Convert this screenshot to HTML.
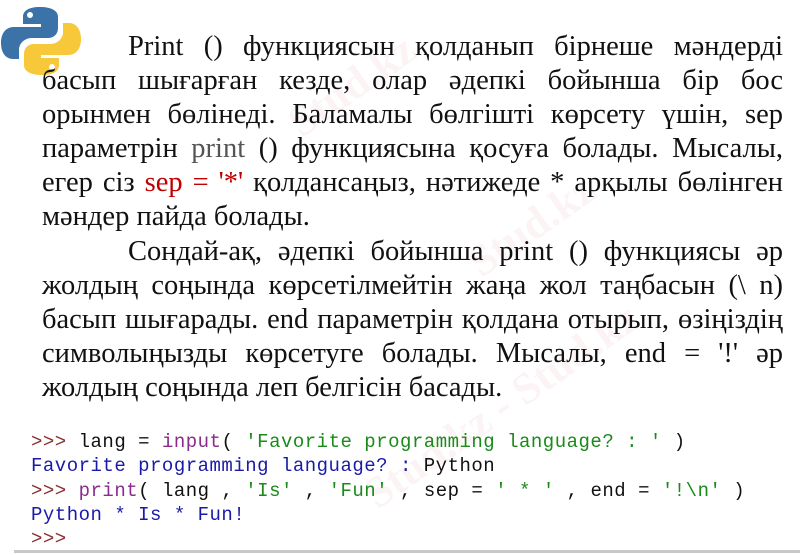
<!DOCTYPE html>
<html><head><meta charset="utf-8"><style>
body{margin:0;width:800px;height:555px;background:#fff;position:relative;overflow:hidden}
.t{position:absolute;left:42px;top:30px;width:741px;font-family:"Liberation Serif",serif;font-size:28.5px;line-height:34.1px;color:#111}
.t div{text-align:justify;text-align-last:justify;white-space:nowrap}
.t div.l{text-align-last:left}
.t div.i{padding-left:86px}
.g{color:#555}.r{color:#c00000}
.c{position:absolute;left:31px;top:430px;font-family:"Liberation Mono",monospace;font-size:19px;letter-spacing:0.5px;line-height:24.3px;white-space:pre;color:#111}
.p{color:#8b2e2e}.f{color:#8b2b8b}.s{color:#1a8a1a}.b{color:#1a1aa8}
.hr{position:absolute;left:14px;top:550px;width:786px;height:3px;background:#c8c8c8}
.wm{position:absolute;font-family:"Liberation Serif",serif;font-weight:bold;font-size:44px;color:rgba(200,60,60,0.06);transform:rotate(-35deg)}
</style></head><body>
<div class="wm" style="left:280px;top:60px">Stud.kz</div>
<div class="wm" style="left:460px;top:200px">Stud.kz</div>
<div class="wm" style="left:340px;top:380px">Stud.kz - Stud.kz</div>
<svg style="position:absolute;left:0;top:5px" width="82" height="72" viewBox="0 0 82 72">
<path d="M40 2c-12 0-17 4-17 10v7h18v3H14C6 22 1 28 1 38s5 16 12 16h6v-9c0-7 6-12 13-12h16c6 0 10-4 10-10V12C58 6 52 2 40 2z" fill="#3b73a8"/>
<circle cx="30" cy="10" r="3" fill="#fff"/>
<path d="M42 70c12 0 17-4 17-10v-7H41v-3h27c8 0 13-6 13-16s-5-16-12-16h-6v9c0 7-6 12-13 12H34c-6 0-10 4-10 10v11c0 6 6 10 18 10z" fill="#f7c83a"/>
<circle cx="52" cy="62" r="3" fill="#fff"/>
</svg>
<div class="t">
<div class="i">Print () функциясын қолданып бірнеше мәндерді</div>
<div>басып шығарған кезде, олар әдепкі бойынша бір бос</div>
<div>орынмен бөлінеді. Баламалы бөлгішті көрсету үшін, sep</div>
<div>параметрін <span class="g">print</span> () функциясына қосуға болады. Мысалы,</div>
<div>егер сіз <span class="r">sep = '*'</span> қолдансаңыз, нәтижеде * арқылы бөлінген</div>
<div class="l">мәндер пайда болады.</div>
<div class="i">Сондай-ақ, әдепкі бойынша print () функциясы әр</div>
<div>жолдың соңында көрсетілмейтін жаңа жол таңбасын (\ n)</div>
<div>басып шығарады. end параметрін қолдана отырып, өзіңіздің</div>
<div>символыңызды көрсетуге болады. Мысалы, end = '!' әр</div>
<div class="l">жолдың соңында леп белгісін басады.</div>
</div>
<div class="c"><span class="p">&gt;&gt;&gt;</span> lang = <span class="f">input</span>( <span class="s">'Favorite programming language? : '</span> )
<span class="b">Favorite programming language? :</span> Python
<span class="p">&gt;&gt;&gt;</span> <span class="f">print</span>( lang , <span class="s">'Is'</span> , <span class="s">'Fun'</span> , sep = <span class="s">' * '</span> , end = <span class="s">'!\n'</span> )
<span class="b">Python * Is * Fun!</span>
<span class="p">&gt;&gt;&gt;</span></div>
<div class="hr"></div>
</body></html>
